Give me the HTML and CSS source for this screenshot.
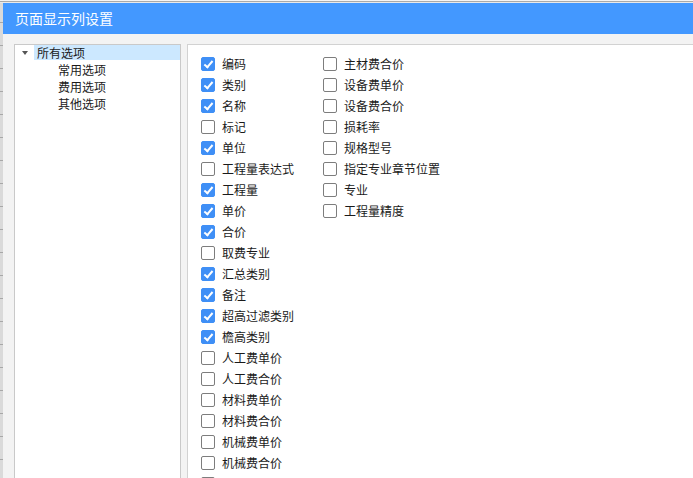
FILE: index.html
```html
<!DOCTYPE html>
<html lang="zh-CN">
<head>
<meta charset="utf-8">
<title>页面显示列设置</title>
<link rel="stylesheet" href="styles.css">
</head>
<body>
<div class="desk">
  <div class="dialog">
    <div class="titlebar">页面显示列设置</div>
    <div class="content">
      <div class="tree">
        <div class="node root">
          <span class="arrow"></span><span class="label sel">所有选项</span>
        </div>
        <div class="node child"><span class="label">常用选项</span></div>
        <div class="node child"><span class="label">费用选项</span></div>
        <div class="node child"><span class="label">其他选项</span></div>
      </div>
      <div class="options">
        <div class="col col1">
          <div class="opt"><span class="cb on"></span>编码</div>
          <div class="opt"><span class="cb on"></span>类别</div>
          <div class="opt"><span class="cb on"></span>名称</div>
          <div class="opt"><span class="cb"></span>标记</div>
          <div class="opt"><span class="cb on"></span>单位</div>
          <div class="opt"><span class="cb"></span>工程量表达式</div>
          <div class="opt"><span class="cb on"></span>工程量</div>
          <div class="opt"><span class="cb on"></span>单价</div>
          <div class="opt"><span class="cb on"></span>合价</div>
          <div class="opt"><span class="cb"></span>取费专业</div>
          <div class="opt"><span class="cb on"></span>汇总类别</div>
          <div class="opt"><span class="cb on"></span>备注</div>
          <div class="opt"><span class="cb on"></span>超高过滤类别</div>
          <div class="opt"><span class="cb on"></span>檐高类别</div>
          <div class="opt"><span class="cb"></span>人工费单价</div>
          <div class="opt"><span class="cb"></span>人工费合价</div>
          <div class="opt"><span class="cb"></span>材料费单价</div>
          <div class="opt"><span class="cb"></span>材料费合价</div>
          <div class="opt"><span class="cb"></span>机械费单价</div>
          <div class="opt"><span class="cb"></span>机械费合价</div>
          <div class="opt"><span class="cb"></span></div>
        </div>
        <div class="col col2">
          <div class="opt"><span class="cb"></span>主材费合价</div>
          <div class="opt"><span class="cb"></span>设备费单价</div>
          <div class="opt"><span class="cb"></span>设备费合价</div>
          <div class="opt"><span class="cb"></span>损耗率</div>
          <div class="opt"><span class="cb"></span>规格型号</div>
          <div class="opt"><span class="cb"></span>指定专业章节位置</div>
          <div class="opt"><span class="cb"></span>专业</div>
          <div class="opt"><span class="cb"></span>工程量精度</div>
        </div>
      </div>
    </div>
  </div>
</div>
</body>
</html>
```
FILE: styles.css
```css
html, body {
  margin: 0;
  padding: 0;
  width: 693px;
  height: 478px;
  overflow: hidden;
}
body {
  background: #dcdcdc;
  font-family: "Microsoft YaHei", "Noto Sans CJK SC", sans-serif;
  font-size: 12px;
  color: #1a1a1a;
}
.desk {
  width: 693px;
  height: 478px;
  box-sizing: border-box;
  padding: 3px 0 0 3px;
  background:
    linear-gradient(#f4f4f4 0, #f4f4f4 1px, #a9a9a9 1px, #a9a9a9 2px, #e9e9e9 2px, #e9e9e9 3px, transparent 3px),
    repeating-linear-gradient(#dadada 0, #dadada 22px, #a8a8a8 22px, #a8a8a8 23px);
  overflow: hidden;
}
.dialog {
  width: 690px;
  height: 475px;
  display: flex;
  flex-direction: column;
  background: #f3f3f3;
}
.titlebar {
  height: 31px;
  flex: none;
  background: #4398ff;
  color: #ffffff;
  font-size: 14px;
  line-height: 31px;
  padding-left: 12px;
  letter-spacing: 0;
}
.content {
  flex: 1;
  display: flex;
  padding: 10px 0 0 11px;
  gap: 6px;
  min-height: 0;
}
.tree {
  width: 165px;
  flex: none;
  background: #ffffff;
  border: 1px solid #c9c9c9;
  border-bottom: none;
}
.node {
  height: 17px;
  display: flex;
  align-items: center;
  line-height: 15px;
}
.root {
  padding-left: 7px;
  margin-top: -1px;
}
.arrow {
  width: 0;
  height: 0;
  border-left: 3.5px solid transparent;
  border-right: 3.5px solid transparent;
  border-top: 4px solid #555;
  margin-right: 6px;
}
.label.sel {
  flex: 1;
  background: #cce8ff;
  height: 15px;
  padding-left: 3px;
}
.child {
  padding-left: 43px;
}
.options {
  flex: 1;
  background: #ffffff;
  border-top: 1px solid #d2d2d2;
  border-left: 1px solid #d2d2d2;
  display: flex;
  padding: 8px 0 0 13px;
  overflow: hidden;
}
.col1 {
  width: 122px;
  flex: none;
}
.col2 {
  flex: 1;
}
.opt {
  height: 21px;
  display: flex;
  align-items: center;
  white-space: nowrap;
}
.cb {
  width: 12px;
  height: 12px;
  box-sizing: content-box;
  border: 1px solid #7d7d7d;
  border-radius: 2px;
  background: #ffffff;
  margin-right: 7px;
  flex: none;
  position: relative;
}
.cb.on {
  background: #3f8ff6;
  border-color: #3f8ff6;
}
.cb.on::after {
  content: "";
  position: absolute;
  left: 4px;
  top: 1px;
  width: 3px;
  height: 7px;
  border-right: 2px solid #ffffff;
  border-bottom: 2px solid #ffffff;
  transform: rotate(40deg);
}
```
